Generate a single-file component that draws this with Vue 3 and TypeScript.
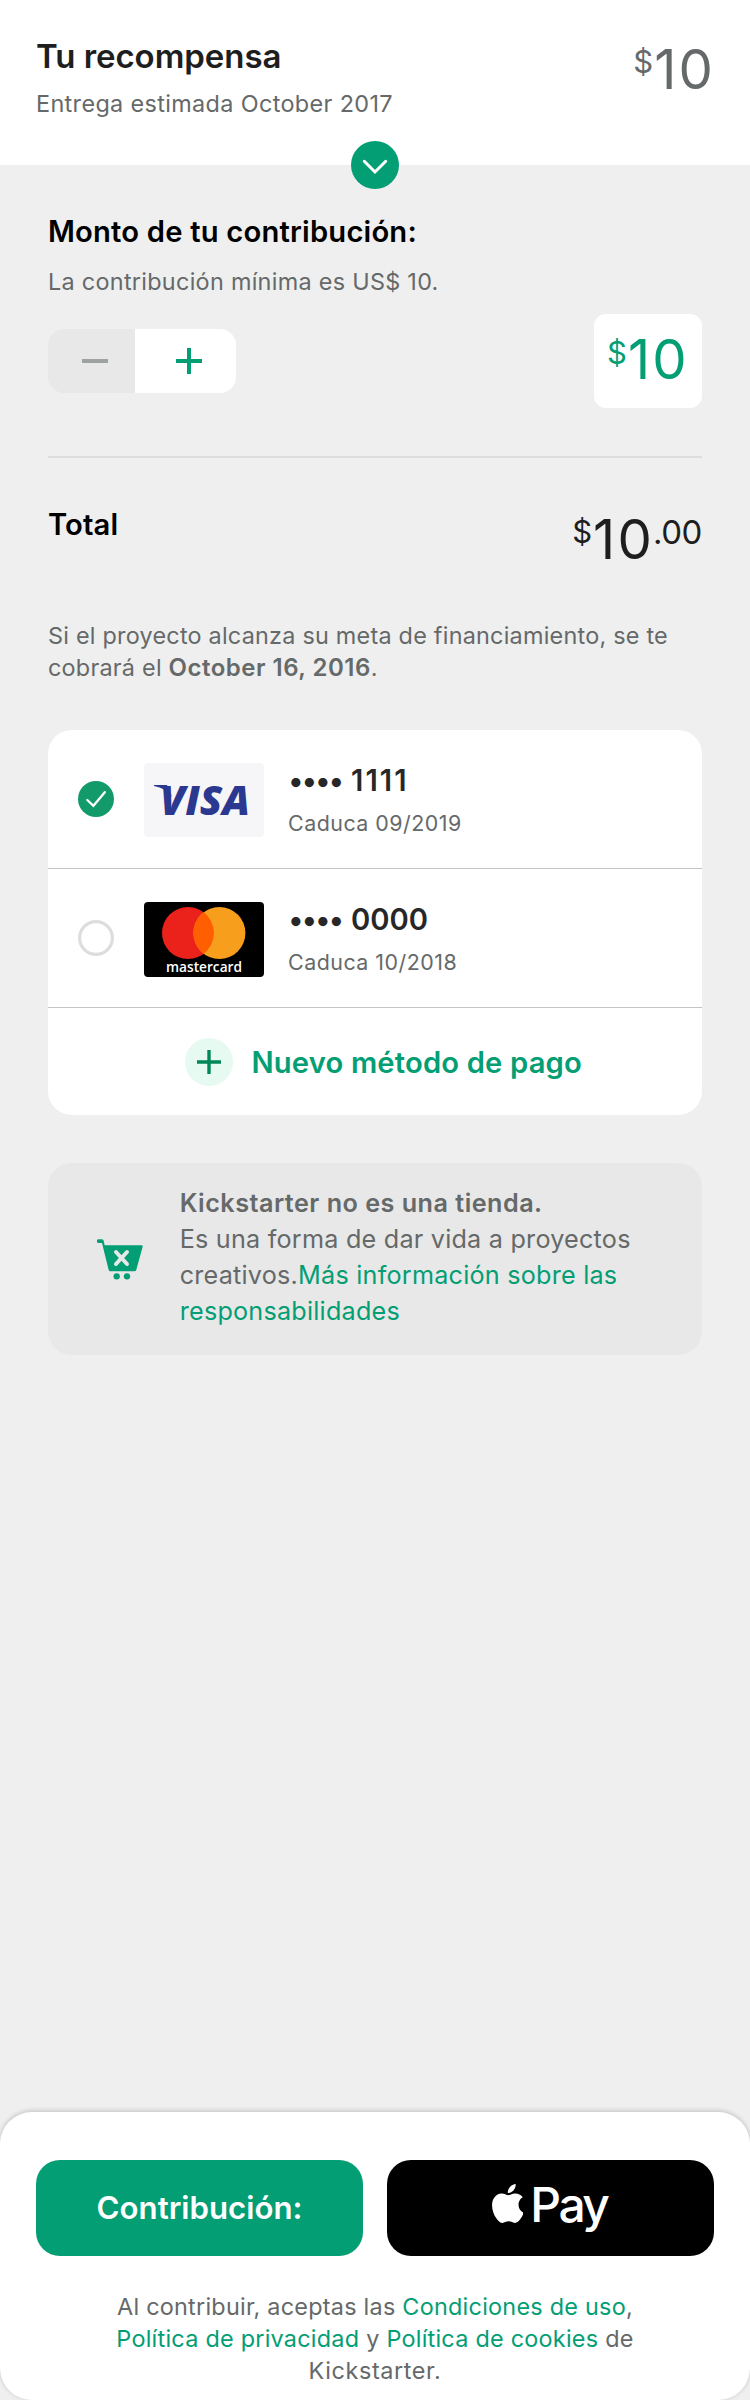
<script setup lang="ts">
import { ref } from 'vue'

interface Card {
  id: string
  brand: 'visa' | 'mastercard'
  last4: string
  expires: string
}

const cards: Card[] = [
  { id: 'c1', brand: 'visa', last4: '1111', expires: 'Caduca 09/2019' },
  { id: 'c2', brand: 'mastercard', last4: '0000', expires: 'Caduca 10/2018' },
]
const selected = ref('c1')
const minimum = 10
const amount = ref(minimum)
</script>

<template>
  <main class="page">
    <header class="header">
      <div>
        <h1 class="title">Tu recompensa</h1>
        <p class="caption">Entrega estimada October 2017</p>
      </div>
      <div class="money money-gray">
        <span class="cur">$</span><span class="num">{{ minimum }}</span>
      </div>
      <div class="toggle">
        <svg width="48" height="48" viewBox="0 0 48 48">
          <path d="M13.300 20.300 24 31 34.700 20.300" fill="none" stroke="#fff" stroke-width="3" stroke-linecap="round" />
        </svg>
      </div>
    </header>

    <section class="body">
      <h2 class="heading">Monto de tu contribución:</h2>
      <p class="caption minimum">La contribución mínima es US$ 10.</p>

      <div class="amount-row">
        <div class="stepper">
          <button class="step minus" :disabled="amount <= minimum" @click="amount--">
            <svg width="26" height="26" viewBox="0 0 26 26"><path d="M0 13H26" stroke="#9fa2a2" stroke-width="4" /></svg>
          </button>
          <button class="step plus" @click="amount++">
            <svg width="26" height="26" viewBox="0 0 26 26"><path d="M0 13H26M13 0V26" stroke="#039e74" stroke-width="4" /></svg>
          </button>
        </div>
        <div class="field">
          <div class="money money-green">
            <span class="cur">$</span><span class="num">{{ amount }}</span>
          </div>
        </div>
      </div>

      <div class="total-row">
        <h2 class="heading total-label">Total</h2>
        <div class="money money-black">
          <span class="cur">$</span><span class="num">{{ amount }}</span><span class="dec">.00</span>
        </div>
      </div>

      <p class="disclaimer">
        <span class="ln">Si el proyecto alcanza su meta de financiamiento, se te</span>
        <span class="ln">cobrará el <b>October 16, 2016</b>.</span>
      </p>

      <div class="methods">
        <div v-for="c in cards" :key="c.id" class="method" @click="selected = c.id">
          <svg v-if="selected === c.id" width="36" height="36" viewBox="0 0 36 36">
            <circle cx="18" cy="18" r="18" fill="#139a6b" />
            <path d="M9.300 19 15.400 24.800 26.800 11.200" fill="none" stroke="#fff" stroke-width="2.300" stroke-linecap="round" />
          </svg>
          <svg v-else width="36" height="36" viewBox="0 0 36 36">
            <circle cx="18" cy="18" r="16.400" fill="#fff" stroke="#dcdedd" stroke-width="3.200" />
          </svg>

          <svg v-if="c.brand === 'visa'" class="brand" width="120" height="74" viewBox="0 0 120 74">
            <rect width="120" height="74" rx="4" fill="#f6f6f9" />
            <path d="M10 22H23L28 34Q22 25 10 23Z" fill="#2a3890" />
            <text x="16" y="52" textLength="90" lengthAdjust="spacingAndGlyphs" class="visa">VISA</text>
          </svg>
          <svg v-else class="brand" width="120" height="75" viewBox="0 0 120 75">
            <rect width="120" height="75" rx="4" fill="#000" />
            <circle cx="44" cy="31" r="26" fill="#eb211c" />
            <circle cx="75.400" cy="31" r="26" fill="#f79f1c" />
            <path d="M59.700 10.300A26 26 0 0 1 59.700 51.700A26 26 0 0 1 59.700 10.300Z" fill="#ff5f00" />
            <text x="22" y="69.600" textLength="76" lengthAdjust="spacingAndGlyphs" class="mc">mastercard</text>
          </svg>

          <div>
            <div class="number">
              <span class="dots">••••</span>
              <span :class="{ ones: c.brand === 'visa' }">{{ c.last4 }}</span>
            </div>
            <div class="expires">{{ c.expires }}</div>
          </div>
        </div>
        <div class="add">
          <svg width="48" height="48" viewBox="0 0 48 48">
            <circle cx="24" cy="24" r="24" fill="#e6faf1" />
            <path d="M12 24H36M24 12V36" stroke="#028858" stroke-width="3.400" />
          </svg>
          <span class="add-text">Nuevo método de pago</span>
        </div>
      </div>

      <div class="notice">
        <svg width="46" height="41" viewBox="36 41 138 123">
          <path d="M41 41.500H51Q55 41.500 56 46L59 60H170Q174 60 173 64L154 133Q152.500 138 148 138H76Q72 138 71 134L51 53H41A5.700 5.700 0 0 1 41 41.500Z" fill="#039e74" />
          <circle cx="95" cy="153" r="9.500" fill="#039e74" />
          <circle cx="126" cy="153" r="9.500" fill="#039e74" />
          <path d="M93 80 126 116M126 80 93 116" stroke="#e8e8e8" stroke-width="12" stroke-linecap="round" />
        </svg>
        <p class="notice-text">
          <b class="ln">Kickstarter no es una tienda.</b>
          <span class="ln">Es una forma de dar vida a proyectos</span>
          <span class="ln">creativos.<a>Más información sobre las</a></span>
          <a class="ln">responsabilidades</a>
        </p>
      </div>
    </section>

    <footer class="footer">
      <div class="buttons">
        <button class="btn pledge">Contribución:</button>
        <button class="btn apple">
          <svg width="31.800" height="39" viewBox="2.2 0 19.6 24">
            <path fill="#fff" d="M12.152 6.896c-.948 0-2.415-1.078-3.96-1.04-2.04.027-3.91 1.183-4.961 3.014-2.117 3.675-.546 9.103 1.519 12.09 1.013 1.454 2.208 3.09 3.792 3.039 1.52-.065 2.09-.987 3.935-.987 1.831 0 2.35.987 3.96.948 1.637-.026 2.676-1.48 3.676-2.948 1.156-1.688 1.636-3.325 1.662-3.415-.039-.013-3.182-1.221-3.22-4.857-.026-3.04 2.48-4.494 2.597-4.559-1.429-2.09-3.623-2.324-4.39-2.376-2-.156-3.675 1.09-4.61 1.09zM15.53 3.83c.843-1.012 1.4-2.427 1.245-3.83-1.207.052-2.662.805-3.532 1.818-.78.896-1.454 2.338-1.273 3.714 1.338.104 2.715-.688 3.559-1.701" />
          </svg>
          <span class="pay">Pay</span>
        </button>
      </div>
      <p class="terms">
        <span class="ln">Al contribuir, aceptas las <a>Condiciones de uso</a>,</span>
        <span class="ln"><a>Política de privacidad</a> y <a>Política de cookies</a> de</span>
        <span class="ln last">Kickstarter.</span>
      </p>
    </footer>
  </main>
</template>

<style>
body {
  margin: 0;
  background: #efefef;
}
</style>

<style scoped>
.page {
  width: 750px;
  height: 2400px;
  display: flex;
  flex-direction: column;
  overflow: hidden;
  background: #efefef;
  font-family: Inter, "Liberation Sans", sans-serif;
  color: #1e1e1e;
}
h1, h2, p {
  margin: 0;
}
button {
  border: 0;
  padding: 0;
  font-family: inherit;
}
svg {
  display: block;
  flex: none;
}
a {
  color: #039e74;
}
.ln {
  display: block;
  white-space: nowrap;
}
.header {
  position: relative;
  box-sizing: border-box;
  height: 165px;
  padding: 36px 36px 0;
  display: flex;
  justify-content: space-between;
  align-items: flex-start;
  background: #fff;
}
.title {
  font-size: 33px;
  line-height: 40px;
  font-weight: 600;
  letter-spacing: -0.06px;
}
.caption {
  margin-top: 11.5px;
  font-size: 23.4px;
  line-height: 32px;
  letter-spacing: 0.36px;
  color: #656969;
  white-space: nowrap;
}
.toggle {
  position: absolute;
  left: 351px;
  bottom: -24px;
  width: 48px;
  height: 48px;
  border-radius: 50%;
  background: #039e74;
}
.money {
  display: flex;
  align-items: flex-start;
}
.money-gray { color: #656969; }
.money-green { color: #039e74; }
.money-black { color: #1e1e1e; }
.cur {
  margin-top: 6px;
  margin-right: 1px;
  font-size: 31px;
  line-height: 40px;
}
.money-green .cur {
  margin-top: 7px;
}
.num {
  margin-right: -1.3px;
  font-size: 54.5px;
  line-height: 66px;
  letter-spacing: 2.3px;
}
.dec {
  margin-top: 6px;
  font-size: 33px;
  line-height: 40px;
  letter-spacing: -0.4px;
}
.body {
  padding: 49px 48px 0;
}
.heading {
  font-size: 29.2px;
  line-height: 36px;
  font-weight: 600;
  letter-spacing: 0.19px;
  color: #000;
}
.minimum {
  margin-top: 15.5px;
  letter-spacing: 0.29px;
}
.amount-row {
  margin-top: 16.5px;
  padding-bottom: 48px;
  border-bottom: 2px solid #dcdddd;
  display: flex;
  justify-content: space-between;
  align-items: center;
}
.stepper {
  width: 188px;
  height: 64px;
  display: flex;
  border-radius: 16px;
  overflow: hidden;
}
.step {
  height: 64px;
  display: flex;
  align-items: center;
}
.minus {
  width: 87px;
  padding-left: 34px;
  background: #e8e8e8;
}
.plus {
  flex: 1;
  padding-left: 41px;
  background: #fff;
}
.field {
  box-sizing: border-box;
  width: 108px;
  height: 94px;
  padding: 12px 13px 0;
  border-radius: 12px;
  background: #fff;
}
.total-row {
  margin-top: 48px;
  display: flex;
  justify-content: space-between;
  align-items: flex-start;
}
.total-label {
  padding-top: 1px;
  letter-spacing: 0.13px;
}
.disclaimer {
  margin-top: 47.5px;
  font-size: 23.4px;
  line-height: 32px;
  letter-spacing: 0.23px;
  color: #656969;
}
.disclaimer b {
  font-size: 24px;
  font-weight: 600;
  line-height: 1;
  letter-spacing: 0.5px;
}
.methods {
  margin-top: 46.5px;
  height: 385px;
  border-radius: 24px;
  background: #fff;
}
.method {
  height: 138px;
  padding-left: 30px;
  display: flex;
  align-items: center;
  border-bottom: 1px solid #c4c4c4;
}
.brand {
  margin: 2px 24px 0 30px;
}
.visa {
  font: italic 800 41.5px "Open Sans", sans-serif;
  fill: #2a3890;
}
.mc {
  font: 600 13.8px "Open Sans", sans-serif;
  fill: #fff;
}
.number {
  display: flex;
  gap: 8.5px;
  padding: 1px 0 0 0.5px;
  font-size: 29.2px;
  line-height: 36px;
  font-weight: 600;
  color: #272727;
}
.dots {
  letter-spacing: -1.2px;
}
.ones {
  letter-spacing: 2.1px;
}
.expires {
  margin-top: 10px;
  font-size: 21.4px;
  line-height: 28px;
  letter-spacing: 0.5px;
  color: #656969;
}
.add {
  height: 107px;
  padding-left: 137px;
  display: flex;
  align-items: center;
}
.add-text {
  margin: 3px 0 0 18.5px;
  font-size: 29.2px;
  line-height: 36px;
  font-weight: 600;
  letter-spacing: 0.16px;
  color: #039e74;
}
.notice {
  margin-top: 48px;
  box-sizing: border-box;
  height: 192px;
  padding-left: 49px;
  display: flex;
  align-items: center;
  border-radius: 24px;
  background: #e8e8e8;
}
.notice-text {
  margin: -4px 0 0 36.7px;
  font-size: 25.2px;
  line-height: 36px;
  letter-spacing: 0.22px;
  color: #656969;
}
.notice-text b {
  font-weight: 600;
  letter-spacing: 0.48px;
}
.footer {
  box-sizing: border-box;
  height: 288px;
  margin-top: auto;
  padding: 48px 36px 0;
  border-radius: 32px;
  background: #fff;
  box-shadow: 0 -1px 5px rgba(0, 0, 0, 0.2);
}
.buttons {
  display: grid;
  grid-template-columns: 1fr 1fr;
  gap: 24px;
}
.btn {
  height: 96px;
  display: flex;
  align-items: center;
  justify-content: center;
  border-radius: 24px;
  color: #fff;
}
.pledge {
  background: #039e74;
  font-size: 31.2px;
  font-weight: 600;
}
.apple {
  background: #000;
}
.apple svg {
  margin: 0 0 9px -2px;
}
.pay {
  margin: 0 0 7px 7px;
  font-size: 48px;
  line-height: 48px;
  font-weight: 500;
  letter-spacing: -2.55px;
}
.terms {
  margin-top: 34.5px;
  text-align: center;
  font-size: 23.4px;
  line-height: 32px;
  letter-spacing: 0.25px;
  color: #656969;
}
.last {
  letter-spacing: 0.61px;
}
</style>
